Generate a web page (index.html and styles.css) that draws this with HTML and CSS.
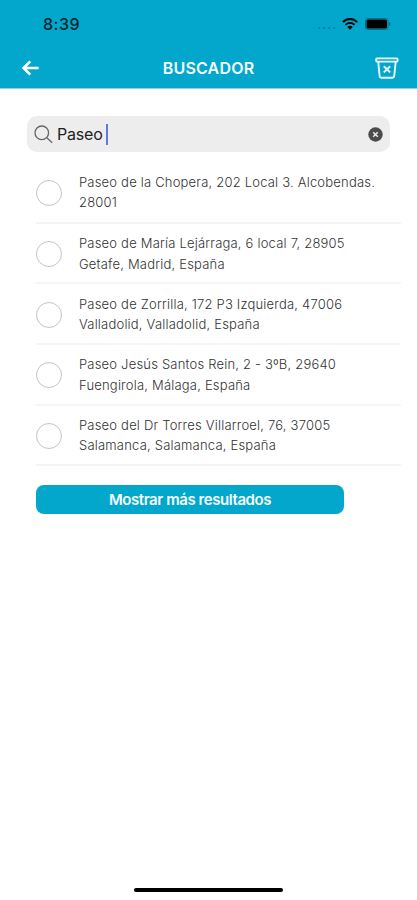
FILE: index.html
```
<!DOCTYPE html>
<html lang="es">
<head>
    <meta charset="UTF-8">
    <meta name="viewport" content="width=device-width, initial-scale=1.0">
    <title>Buscador</title>

    <link rel="stylesheet" href="styles.css">
</head>
<body>

<header class="header">
    <div class="status-bar">
        <span class="time">8:39</span>
        <div class="status-icons">
            <svg class="signal" width="19" height="4" viewBox="0 0 19 4">
                <circle cx="2" cy="2" r="1.1"/>
                <circle cx="7" cy="2" r="1.1"/>
                <circle cx="12" cy="2" r="1.1"/>
                <circle cx="17" cy="2" r="1.1"/>
            </svg>
            <svg class="wifi" width="16" height="12" viewBox="0 0 16 12">
                <path d="M0.9 4.1C4.9 0 11.1 0 15.1 4.1" fill="none" stroke="#000" stroke-width="2"/>
                <path d="M3.4 6.9C6.1 4.3 9.9 4.3 12.6 6.9" fill="none" stroke="#000" stroke-width="1.8"/>
                <path d="M5.3 8.9C6.9 7.5 9.1 7.5 10.7 8.9L8 11.8Z"/>
            </svg>
            <svg class="battery" width="27" height="12" viewBox="0 0 27 12">
                <rect x="0.5" y="0.5" width="22.5" height="11" rx="2.5" fill="none" stroke="#056f88"/>
                <rect x="1.5" y="1.5" width="20.5" height="9" rx="1.5"/>
                <path d="M24.2 4C26.2 4.6 26.2 7.4 24.2 8Z" fill="#056f88"/>
            </svg>
        </div>
    </div>
    <nav class="nav-bar">
        <svg class="back" width="18" height="16" viewBox="0 0 18 16">
            <path d="M16.6 8H2M8.2 1.4L1.6 8L8.2 14.6" fill="none" stroke="#fff" stroke-width="2.6"/>
        </svg>
        <h1>BUSCADOR</h1>
        <svg class="trash" width="24" height="22" viewBox="0 0 24 22">
            <g fill="none" stroke="#e9fbff" stroke-width="1.9" stroke-linejoin="round">
                <rect x="1.2" y="1.4" width="21.4" height="3.2" rx="0.8"/>
                <path d="M3.3 5L4.6 19.2Q4.8 20.8 6.4 20.8H17.4Q19 20.8 19.2 19.2L20.7 5"/>
                <path d="M8.8 9.2L15.2 15.4M15.2 9.2L8.8 15.4"/>
            </g>
        </svg>
    </nav>
</header>

<main>
    <div class="search">
        <svg width="19" height="19" viewBox="0 0 19 19" fill="none" stroke="#666" stroke-width="1.3">
            <circle cx="7.8" cy="7.8" r="6.8"/>
            <path d="M12.8 12.8L18.2 17.8"/>
        </svg>
        <span class="query">Paseo</span>
        <span class="cursor"></span>
        <svg class="clear" width="15" height="15" viewBox="0 0 15 15">
            <circle cx="7.5" cy="7.5" r="7.2" fill="#4b4b4b"/>
            <path d="M5.2 5.2L9.8 9.8M9.8 5.2L5.2 9.8" stroke="#eee" stroke-width="1.5"/>
        </svg>
    </div>

    <ul class="results">
        <li><span class="radio"></span><p>Paseo de la Chopera, 202 Local 3. Alcobendas.<br>28001</p></li>
        <li><span class="radio"></span><p>Paseo de María Lejárraga, 6 local 7, 28905<br>Getafe, Madrid, España</p></li>
        <li><span class="radio"></span><p>Paseo de Zorrilla, 172 P3 Izquierda, 47006<br>Valladolid, Valladolid, España</p></li>
        <li><span class="radio"></span><p>Paseo Jesús Santos Rein, 2 - 3ºB, 29640<br>Fuengirola, Málaga, España</p></li>
        <li><span class="radio"></span><p>Paseo del Dr Torres Villarroel, 76, 37005<br>Salamanca, Salamanca, España</p></li>
    </ul>

    <button class="more-btn">Mostrar más resultados</button>
</main>

<div class="home-indicator"></div>

</body>
</html>
```
FILE: styles.css
```
* {
    box-sizing: border-box;
}
body {
    font-family: Inter, "Liberation Sans", sans-serif;
    margin: 0;
    height: 900px;
    display: flex;
    flex-direction: column;
    background: #fff;
    overflow: hidden;
}
.header {
    height: 89px;
    background-color: #03a7cb;
    border-bottom: 1px solid #8cd5e6;
}
.status-bar {
    height: 48px;
    padding: 0 25px 0 43px;
    display: flex;
    align-items: center;
    justify-content: space-between;
}
.time {
    font-size: 16px;
    font-weight: 500;
    letter-spacing: 0.5px;
    color: #03242c;
}
.status-icons {
    display: flex;
    align-items: center;
}
.signal {
    margin: 8px 6px 0 0;
    fill: #057a95;
}
.wifi {
    margin-right: 7px;
}
.nav-bar {
    height: 40px;
    padding: 0 18px 0 22px;
    display: flex;
    align-items: center;
    justify-content: space-between;
}
.nav-bar h1 {
    margin: 0 0 0 2px;
    font-size: 16px;
    font-weight: 600;
    letter-spacing: 0.2px;
    color: #f4fdff;
}
main {
    flex: 1;
    padding-top: 27px;
}
.search {
    height: 36px;
    margin: 0 27px;
    padding: 0 7px;
    display: flex;
    align-items: center;
    background-color: #ededed;
    border-radius: 10px;
}
.query {
    margin-left: 4px;
    font-size: 16px;
    letter-spacing: -0.2px;
    color: #222;
}
.cursor {
    width: 2px;
    height: 21px;
    margin-left: 3px;
    background-color: #5c7be0;
}
.clear {
    margin-left: auto;
}
.results {
    list-style: none;
    margin: 10px 16px 0 36px;
    padding: 0;
}
.results li {
    height: 60.6px;
    display: flex;
    align-items: center;
    border-bottom: 2px solid #f5f5f5;
}
.results li:first-child {
    height: 61.8px;
}
.results p {
    margin: 1px 0 0;
    font-size: 13px;
    font-weight: 300;
    line-height: 20.3px;
    letter-spacing: 0.2px;
    white-space: nowrap;
    color: #333;
}
.radio {
    width: 26px;
    height: 26px;
    margin: 2px 17.5px 0 -0.5px;
    border: 1px solid #c4c4c4;
    border-radius: 50%;
}
.more-btn {
    display: block;
    width: 308px;
    height: 29px;
    margin: 19px 0 0 36px;
    padding: 0;
    border: none;
    border-radius: 8px;
    background-color: #03a7cb;
    color: #f4fdff;
    font-family: inherit;
    font-size: 15px;
    font-weight: 600;
    letter-spacing: -0.43px;
}
.home-indicator {
    width: 149px;
    height: 4px;
    margin: 0 auto 8px;
    border-radius: 2px;
    background-color: #000;
}
```
